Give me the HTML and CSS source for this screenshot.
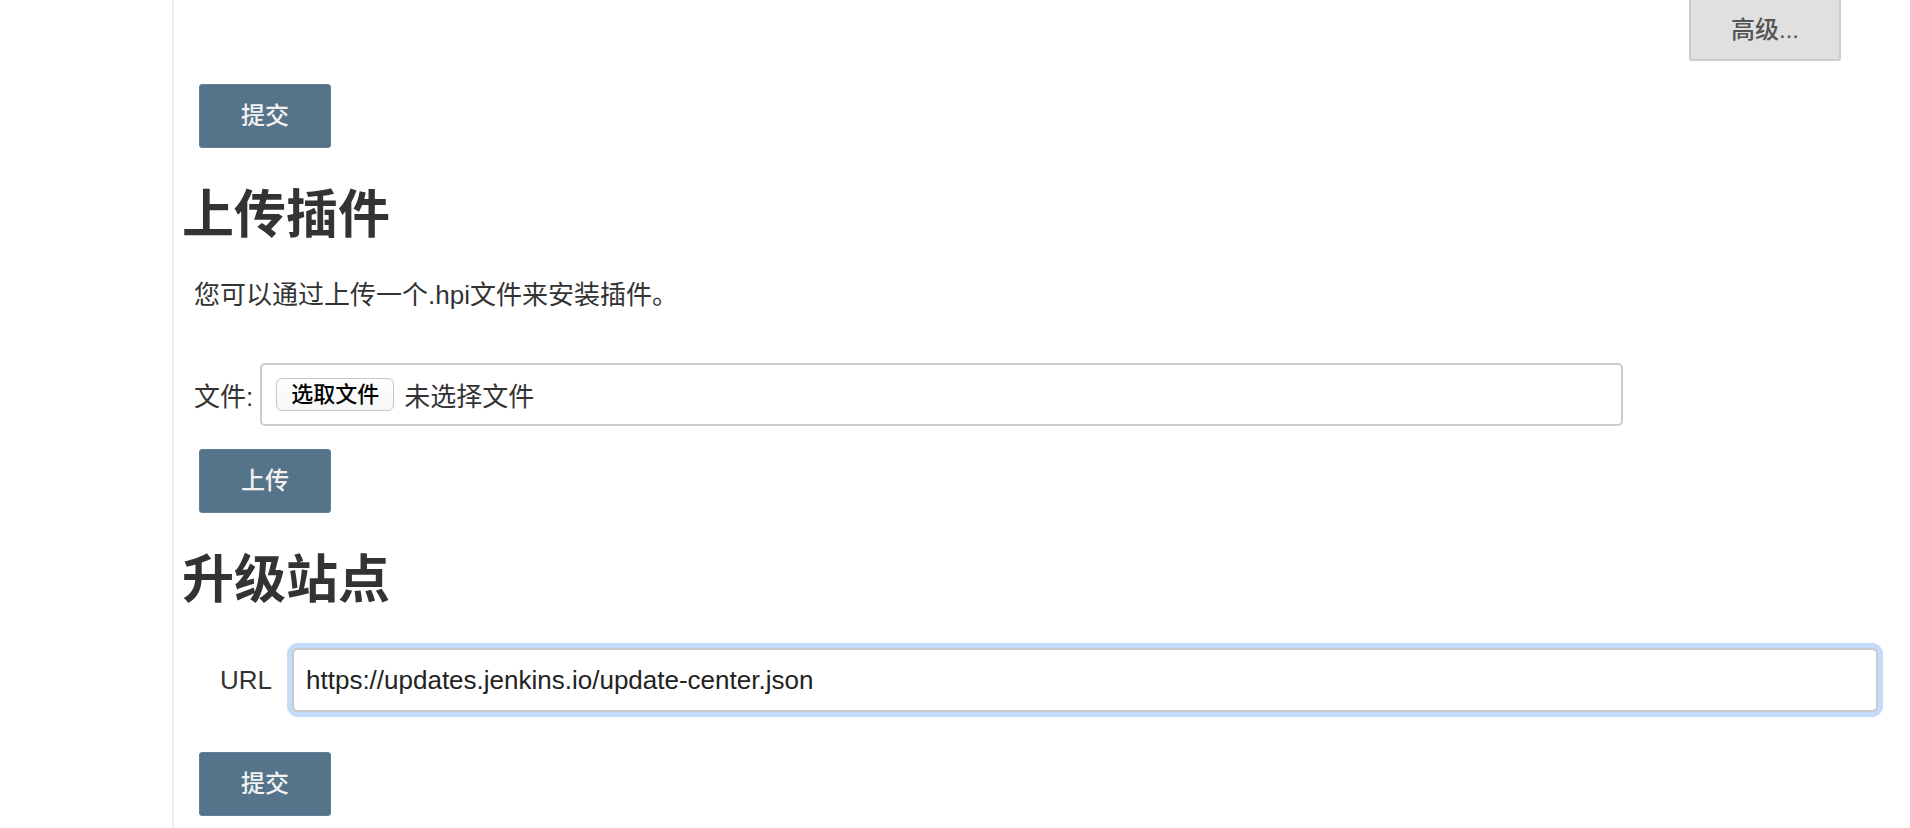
FILE: index.html
```html
<!DOCTYPE html>
<html lang="zh-CN">
<head>
<meta charset="utf-8">
<title>插件管理</title>
<link rel="stylesheet" href="styles.css">
</head>
<body>
<div class="page">
  <aside class="sidebar"></aside>
  <main class="main">
    <div class="adv-row"><button class="btn-adv" type="button">高级...</button></div>
    <button class="btn-primary btn-first" type="button">提交</button>
    <h1 class="section-title">上传插件</h1>
    <p class="hint">您可以通过上传一个.hpi文件来安装插件。</p>
    <div class="file-row">
      <label class="file-label">文件:</label>
      <div class="file-box">
        <button class="file-btn" type="button">选取文件</button>
        <span class="file-name">未选择文件</span>
      </div>
    </div>
    <button class="btn-primary btn-upload" type="button">上传</button>
    <h1 class="section-title">升级站点</h1>
    <div class="url-row">
      <label class="url-label">URL</label>
      <input class="url-input" type="text" value="https://updates.jenkins.io/update-center.json">
    </div>
    <button class="btn-primary btn-last" type="button">提交</button>
  </main>
</div>
</body>
</html>
```
FILE: styles.css
```css
html, body {
  margin: 0;
  padding: 0;
  background: #fff;
  overflow: hidden;
}

body {
  font-family: "Liberation Sans", "Noto Sans CJK SC", sans-serif;
  color: #333;
}

.page {
  display: flex;
  min-height: 828px;
}

.sidebar {
  width: 172px;
  flex: none;
  border-right: 2px solid #eeeeee;
}

.main {
  flex: 1;
  display: flex;
  flex-direction: column;
  align-items: flex-start;
  padding-right: 32px;
}

.adv-row {
  align-self: stretch;
  display: flex;
  justify-content: flex-end;
  margin-top: -3px;
}

.btn-adv {
  box-sizing: border-box;
  width: 152px;
  height: 64px;
  margin-right: 37px;
  background: #e0e0e0;
  border: 2px solid #cccccc;
  border-radius: 3px;
  color: #555;
  font-family: "Liberation Sans", "Noto Sans CJK SC", sans-serif;
  font-size: 24px;
  font-weight: 500;
  padding: 0 0 4px 0;
}

.btn-primary {
  box-sizing: border-box;
  width: 132px;
  height: 64px;
  margin-left: 25px;
  background: #557389;
  border: 1px solid #5f8098;
  border-radius: 3px;
  color: #f2f2f2;
  font-family: "Liberation Sans", "Noto Sans CJK SC", sans-serif;
  font-size: 24px;
  font-weight: 500;
  padding: 0 0 6px 0;
}

.btn-first { margin-top: 23px; }
.btn-upload { margin-top: 23px; }
.btn-last { margin-top: 40px; }

.section-title {
  margin: 37px 0 0 8px;
  font-size: 52px;
  line-height: 60px;
  font-weight: bold;
  color: #333;
}

.hint {
  margin: 32px 0 0 20px;
  font-size: 26px;
  line-height: 36px;
  color: #333;
}

.file-row {
  display: flex;
  align-items: center;
  margin: 50px 0 0 20px;
}

.file-label {
  font-size: 26px;
  color: #333;
  margin-right: 7px;
}

.file-box {
  box-sizing: border-box;
  width: 1363px;
  height: 63px;
  border: 2px solid #cccccc;
  border-radius: 5px;
  display: flex;
  align-items: center;
  padding-left: 14px;
}

.file-btn {
  box-sizing: border-box;
  height: 33px;
  padding: 0 14px;
  background: linear-gradient(#ffffff, #f6f6f6);
  border: 1px solid #c6c6c6;
  border-radius: 6px;
  color: #000;
  font-family: "Liberation Sans", "Noto Sans CJK SC", sans-serif;
  font-size: 22px;
  font-weight: 500;
  line-height: 31px;
}

.file-name {
  margin-left: 10px;
  font-size: 26px;
  color: #333;
}

.section-title + .url-row { margin-top: 38px; }

.url-row {
  align-self: stretch;
  display: flex;
  align-items: center;
  margin-left: 46px;
}

.url-label {
  font-size: 26px;
  color: #333;
  margin-right: 20px;
}

.url-input {
  flex: 1;
  box-sizing: border-box;
  height: 64px;
  border: 2px solid #c9c9c9;
  border-radius: 6px;
  padding: 0 12px;
  font-family: "Liberation Sans", "Noto Sans CJK SC", sans-serif;
  font-size: 26px;
  color: #222;
  box-shadow: 0 0 0 5px #c4dcf8;
  outline: none;
}
```
